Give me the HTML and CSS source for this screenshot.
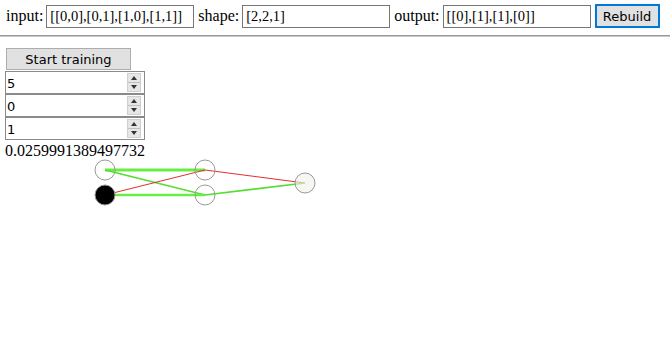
FILE: index.html
```html
<!DOCTYPE html>
<html lang="en">
    <head>
        <meta charset="UTF-8">
        <title>Network</title>
        <link rel="stylesheet" href="styles.css">
    </head>
    <body>
        <div class="config">
            <label>input:</label>
            <input type="text" class="field" value="[[0,0],[0,1],[1,0],[1,1]]">
            <label>shape:</label>
            <input type="text" class="field" value="[2,2,1]">
            <label>output:</label>
            <input type="text" class="field" value="[[0],[1],[1],[0]]">
            <button class="rebuild">Rebuild</button>
        </div>
        <hr class="sep">

        <div class="controls">
            <button class="train">Start training</button>
            <div class="num"><input type="text" value="5"><span class="spin"><i class="up"></i><i class="down"></i></span></div>
            <div class="num"><input type="text" value="0"><span class="spin"><i class="up"></i><i class="down"></i></span></div>
            <div class="num"><input type="text" value="1"><span class="spin"><i class="up"></i><i class="down"></i></span></div>
            <div class="error">0.0259991389497732</div>
        </div>

        <svg class="net" width="330" height="52" viewBox="0 0 330 52">
            <!-- layer 0 -> layer 1 -->
            <line x1="105" y1="12" x2="205" y2="12" stroke="#66ee44" stroke-width="3"/>
            <line x1="105" y1="12" x2="205" y2="37" stroke="#55dd33" stroke-width="1.5"/>
            <line x1="105" y1="37" x2="205" y2="12" stroke="#e03030" stroke-width="1"/>
            <line x1="105" y1="37" x2="205" y2="37" stroke="#66ee44" stroke-width="2.5"/>
            <!-- layer 1 -> layer 2 -->
            <line x1="205" y1="12" x2="305" y2="25" stroke="#e03030" stroke-width="1"/>
            <line x1="205" y1="37" x2="305" y2="25" stroke="#55dd33" stroke-width="1.5"/>

            <circle cx="105" cy="12" r="10" fill="none" stroke="#999" stroke-width="1"/>
            <circle cx="105" cy="37" r="10" fill="#000" stroke="#999" stroke-width="1"/>
            <circle cx="205" cy="12" r="10" fill="none" stroke="#999" stroke-width="1"/>
            <circle cx="205" cy="37" r="10" fill="none" stroke="#999" stroke-width="1"/>
            <circle cx="305" cy="25" r="10" fill="rgba(240,240,235,0.6)" stroke="#999" stroke-width="1"/>
        </svg>
    </body>
</html>
```

FILE: styles.css
```css
body {
    margin: 0;
    padding: 0;
    font-family: "Liberation Serif", "Times New Roman", serif;
    font-size: 16px;
    background-color: #fff;
    color: #000;
}

.config {
    display: flex;
    align-items: center;
    padding: 4px 0 0 6px;
    height: 24px;
}

.config label {
    margin-right: 3px;
}

.field {
    box-sizing: border-box;
    width: 148px;
    height: 23px;
    margin-right: 4px;
    padding: 1px 3px;
    border: 1px solid #767676;
    font-family: "Liberation Serif", serif;
    font-size: 14.5px;
}

.rebuild {
    box-sizing: border-box;
    width: 65px;
    height: 24px;
    border: 2px solid #0078d7;
    background-color: #e1e1e1;
    font-family: "DejaVu Sans", sans-serif;
    font-size: 13px;
    padding: 0;
}

.sep {
    margin: 7px 0 0 0;
    border: 0;
    border-top: 1px solid #9a9a9a;
    border-bottom: 1px solid #c8c8c8;
    height: 0;
}

.controls {
    padding: 11px 0 0 5px;
}

.train {
    box-sizing: border-box;
    display: block;
    width: 125px;
    height: 22px;
    margin: 0 0 1px 1px;
    border: 1px solid #adadad;
    background-color: #e1e1e1;
    font-family: "DejaVu Sans", sans-serif;
    font-size: 13px;
    padding: 0;
}

.num {
    box-sizing: border-box;
    display: flex;
    align-items: center;
    width: 140px;
    height: 23px;
    border: 1px solid #8a8a8a;
}

.num input {
    flex: 1;
    min-width: 0;
    border: 0;
    outline: none;
    padding: 2px 1px 0;
    font-family: "DejaVu Sans", sans-serif;
    font-size: 13px;
}

.spin {
    display: flex;
    flex-direction: column;
    width: 12px;
    height: 17px;
    margin-right: 3px;
    border: 1px solid #d0d0d0;
    background-color: #e6e6e6;
}

.spin i {
    flex: 1;
    display: flex;
    align-items: center;
    justify-content: center;
}

.spin .up {
    border-bottom: 1px solid #c0c0c0;
}

.spin .up::before {
    content: "";
    border-left: 3px solid transparent;
    border-right: 3px solid transparent;
    border-bottom: 4px solid #333;
}

.spin .down::before {
    content: "";
    border-left: 3px solid transparent;
    border-right: 3px solid transparent;
    border-top: 4px solid #333;
}

.error {
    line-height: 18px;
    margin-top: 2px;
}

.net {
    display: block;
    margin-top: -2px;
}
```
